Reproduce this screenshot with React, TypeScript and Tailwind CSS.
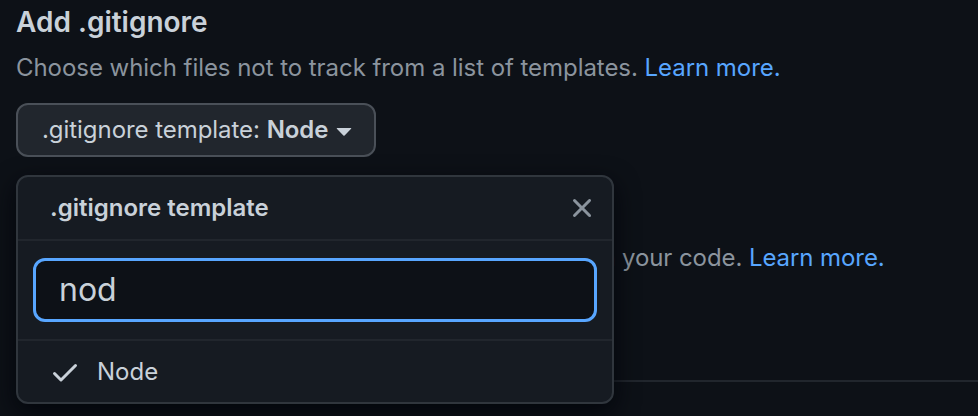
import React from "react";

function CheckIcon() {
  return (
    <svg width="32" height="32" viewBox="0 0 16 16" fill="currentColor" className="shrink-0">
      <path d="M13.78 4.22a.75.75 0 0 1 0 1.06l-7.25 7.25a.75.75 0 0 1-1.06 0L2.22 9.28a.751.751 0 0 1 .018-1.042.751.751 0 0 1 1.042-.018L6 10.94l6.72-6.72a.75.75 0 0 1 1.06 0Z" />
    </svg>
  );
}

function XIcon() {
  return (
    <svg width="32" height="32" viewBox="0 0 16 16" fill="currentColor">
      <path d="M3.72 3.72a.75.75 0 0 1 1.06 0L8 6.94l3.22-3.22a.749.749 0 0 1 1.275.326.749.749 0 0 1-.215.734L9.06 8l3.22 3.220a.749.749 0 0 1-.326 1.275.749.749 0 0 1-.734-.215L8 9.06l-3.22 3.22a.751.751 0 0 1-1.042-.018.751.751 0 0 1-.018-1.042L6.94 8 3.72 4.78a.75.75 0 0 1 0-1.06Z" />
    </svg>
  );
}

function CaretIcon() {
  return (
    <svg width="32" height="32" viewBox="0 0 16 16" fill="currentColor" className="shrink-0">
      <path d="m4.427 7.427 3.396 3.396a.25.25 0 0 0 .354 0l3.396-3.396A.25.25 0 0 0 11.396 7H4.604a.25.25 0 0 0-.177.427Z" />
    </svg>
  );
}

export default function App() {
  return (
    <div className="relative w-[978px] h-[416px] overflow-hidden bg-[#0d1117] font-['Inter',_'Liberation_Sans',_sans-serif]">
      <div className="pl-4">
        <h2 className="pt-[2px] text-[28px] leading-[40px] font-semibold text-[#c9d1d9]">Add .gitignore</h2>
        <p className="mt-[8px] text-[24px] leading-[36px] tracking-[-0.05px] text-[#8b949e] whitespace-nowrap">
          Choose which files not to track from a list of templates.{" "}
          <a className="text-[#58a6ff]">Learn more.</a>
        </p>
        <div className="relative mt-[17px]">
          <button className="h-[54px] pl-[24px] pr-[20px] rounded-[12px] border-2 border-[#4a5058] bg-[#21262d] text-[24px] tracking-[-0.05px] text-[#c9d1d9] flex items-center">
            <span>.gitignore template:&nbsp;</span>
            <span className="font-semibold">Node</span>
            <span className="text-[#c9d1d9] -mr-[6px]">
              <CaretIcon />
            </span>
          </button>

          <div className="absolute left-0 top-[72px] z-10 w-[598px] rounded-[12px] border-2 border-[#30363d] bg-[#161b22] shadow-[0_8px_24px_rgba(1,4,9,0.85)]">
            <div className="h-[64px] flex items-center justify-between pl-[32px] pr-[14px] border-b-2 border-[#21262d]">
              <span className="text-[24px] font-semibold text-[#c9d1d9]">.gitignore template</span>
              <span className="text-[#8b949e]">
                <XIcon />
              </span>
            </div>
            <div className="px-[15px] pt-[17px] pb-[17px] border-b-2 border-[#21262d]">
              <div className="h-[64px] rounded-[12px] border-[3px] border-[#58a6ff] bg-[#0d1117] flex items-center pl-[23px] text-[32px] text-[#c9d1d9]">
                nod
              </div>
            </div>
            <div className="h-[61px] flex items-center pl-[31px] gap-[16px] text-[24px] text-[#c9d1d9]">
              <CheckIcon />
              <span>Node</span>
            </div>
          </div>
        </div>

        <p className="mt-[83px] text-[24px] leading-[36px] tracking-[-0.08px] text-[#8b949e] whitespace-nowrap">
          A license tells others what they can and can't do with your code.{" "}
          <a className="text-[#58a6ff]">Learn more.</a>
        </p>
        <div className="mt-[104px] border-t-2 border-[#21262d]" />
      </div>
    </div>
  );
}
